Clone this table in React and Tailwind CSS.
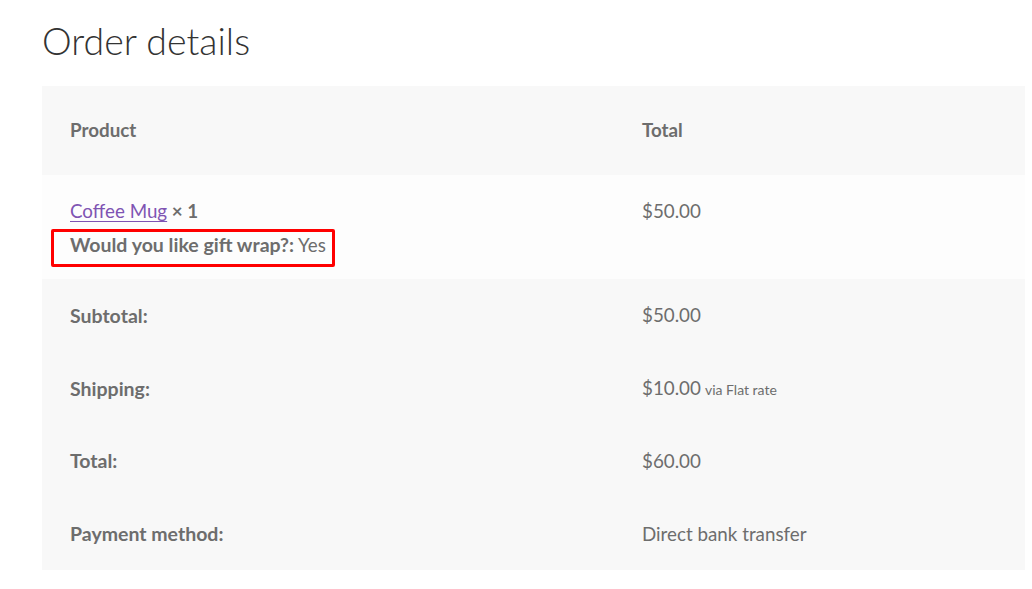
const totals = [
  { label: 'Subtotal:', value: '$50.00' },
  { label: 'Shipping:', value: '$10.00', note: 'via Flat rate' },
  { label: 'Total:', value: '$60.00' },
  { label: 'Payment method:', value: 'Direct bank transfer' },
];

export default function App() {
  return (
    <div className="min-h-[589px] bg-white pl-[42px] pr-[7px] pt-[16px] text-[#6d6d6d]" style={{ fontFamily: 'Lato, "Liberation Sans", sans-serif' }}>
      {/* Heading */}
      <h2 className="text-[37.5px] font-light leading-[50px] text-[#333333]">Order details</h2>

      <div className="mt-[20px] text-[18.8px]">
        {/* Header row */}
        <div className="flex h-[89px] items-center bg-[#f8f8f8] font-bold">
          <div className="w-[572px] pl-[28px]">Product</div>
          <div className="pl-[28px]">Total</div>
        </div>

        {/* Item row */}
        <div className="flex h-[104px] bg-[#fdfdfd] pt-[21px]">
          <div className="w-[572px] pl-[28px]">
            <div className="leading-[30px]">
              <a href="#" className="text-[#7f54b3] underline underline-offset-[3px]">Coffee Mug</a>
              <strong className="font-bold"> × 1</strong>
            </div>
            <div className="relative mt-[4px] leading-[30px]">
              <span className="font-bold text-[19.5px]">Would you like gift wrap?:</span> Yes
              <div className="absolute left-[-19px] top-[-1px] h-[38px] w-[284px] rounded-[2px] border-[3px] border-[#ff0000]" />
            </div>
          </div>
          <div className="pl-[28px] leading-[30px]">$50.00</div>
        </div>

        {/* Totals */}
        <div className="bg-[#f8f8f8]">
          {totals.map((row) => (
            <div key={row.label} className="flex h-[72.75px] items-center">
              <div className="w-[572px] pl-[28px] text-[19.5px] font-bold">{row.label}</div>
              <div className="pl-[28px]">
                {row.value}
                {row.note && <small className="ml-[4px] text-[14px]">{row.note}</small>}
              </div>
            </div>
          ))}
        </div>
      </div>
    </div>
  );
}
